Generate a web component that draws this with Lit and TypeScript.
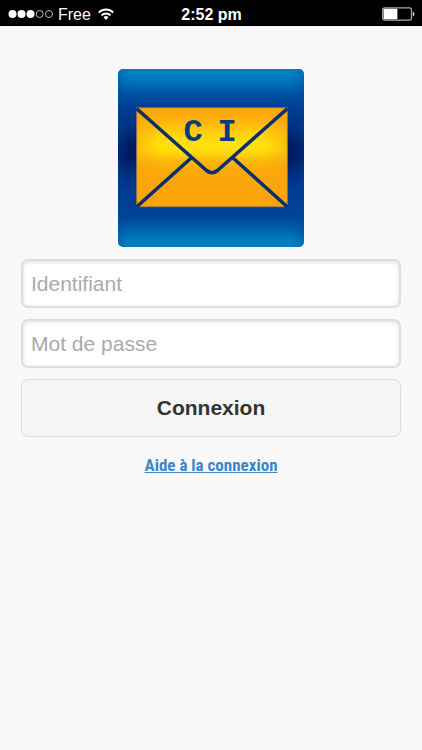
import { LitElement, html, css } from "lit";
import { customElement } from "lit/decorators.js";

@customElement("status-bar")
class StatusBar extends LitElement {
  static styles = css`
    :host {
      display: grid;
      grid-template-columns: 1fr auto 1fr;
      align-items: center;
      height: 26px;
      padding: 0 7px 0 8px;
      background: #000;
      color: #fff;
      font: 16px/26px "Liberation Sans", Arial, sans-serif;
    }
    .carrier {
      display: flex;
      align-items: center;
      gap: 5px;
    }
    .carrier .wifi {
      margin-left: 2px;
    }
    .time {
      font-weight: 700;
      padding-top: 2px;
    }
    .name {
      padding-top: 2px;
    }
    .battery {
      justify-self: end;
    }
    svg {
      display: block;
    }
  `;
  render() {
    return html`
      <div class="carrier">
        <svg width="45" height="10" viewBox="0 0 45 10" aria-hidden="true">
          <g fill="#fff">
            <circle cx="4.5" cy="5" r="4" />
            <circle cx="13.5" cy="5" r="4" />
            <circle cx="22.5" cy="5" r="4" />
          </g>
          <g fill="none" stroke="#bbb">
            <circle cx="31.7" cy="5" r="3.5" />
            <circle cx="41" cy="5" r="3.5" />
          </g>
        </svg>
        <span class="name">Free</span>
        <svg class="wifi" width="16" height="12" viewBox="0 0 16 12" aria-hidden="true">
          <g fill="none" stroke="#fff" stroke-width="2">
            <path d="M0.8 4.6a10.2 10.2 0 0 1 14.4 0" />
            <path d="M3.5 7.4a6.4 6.4 0 0 1 9 0" />
          </g>
          <path d="M8 12L5.5 9.3a3.5 3.5 0 0 1 5 0z" fill="#fff" />
        </svg>
      </div>
      <span class="time">2:52 pm</span>
      <svg class="battery" width="33" height="14" viewBox="0 0 33 14" aria-hidden="true">
        <rect x="0.7" y="0.9" width="28.8" height="12.2" rx="2" fill="none" stroke="#aaa" stroke-width="1.2" />
        <rect x="1.6" y="1.8" width="13.8" height="10.4" rx="0.6" fill="#fff" />
        <path d="M30.8 4.8a2.3 2.3 0 0 1 0 4.4z" fill="#ddd" />
      </svg>
    `;
  }
}

@customElement("mail-logo")
class MailLogo extends LitElement {
  static styles = css`
    :host,
    svg {
      display: block;
    }
    .initials {
      font: 700 32px "Liberation Mono", "Courier New", monospace;
      fill: #0b3a80;
      text-anchor: middle;
    }
  `;
  render() {
    return html`
      <svg width="186" height="178" viewBox="0 0 186 178" role="img" aria-label="CI">
        <defs>
          <linearGradient id="sky" x1="0" y1="0" x2="0" y2="1">
            <stop offset="0" stop-color="#0081c4" />
            <stop offset="0.05" stop-color="#007cc0" />
            <stop offset="0.15" stop-color="#0050a0" />
            <stop offset="0.21" stop-color="#003f92" />
            <stop offset="0.33" stop-color="#003080" />
            <stop offset="0.42" stop-color="#001c62" />
            <stop offset="0.49" stop-color="#00175c" />
            <stop offset="0.6" stop-color="#003080" />
            <stop offset="0.68" stop-color="#003b90" />
            <stop offset="0.83" stop-color="#004496" />
            <stop offset="0.91" stop-color="#0066ae" />
            <stop offset="0.96" stop-color="#007dc0" />
            <stop offset="1" stop-color="#0080c2" />
          </linearGradient>
          <linearGradient id="edge">
            <stop offset="0" stop-color="#00469a" stop-opacity="0.35" />
            <stop offset="0.07" stop-color="#00469a" stop-opacity="0" />
            <stop offset="0.93" stop-color="#00469a" stop-opacity="0" />
            <stop offset="1" stop-color="#00469a" stop-opacity="0.35" />
          </linearGradient>
          <linearGradient id="paper" x1="0" y1="0" x2="0" y2="1">
            <stop offset="0" stop-color="#fca70b" />
            <stop offset="0.1" stop-color="#ffac0b" />
            <stop offset="0.27" stop-color="#ffd40c" />
            <stop offset="0.37" stop-color="#ffe20c" />
            <stop offset="0.44" stop-color="#ffdc0c" />
            <stop offset="0.54" stop-color="#fcb90b" />
            <stop offset="0.64" stop-color="#faa80a" />
            <stop offset="1" stop-color="#f9a40a" />
          </linearGradient>
          <linearGradient id="shade">
            <stop offset="0" stop-color="#f9a40a" stop-opacity="0.6" />
            <stop offset="0.16" stop-color="#f9a40a" stop-opacity="0" />
            <stop offset="0.84" stop-color="#f9a40a" stop-opacity="0" />
            <stop offset="1" stop-color="#f9a40a" stop-opacity="0.6" />
          </linearGradient>
        </defs>
        <rect width="186" height="178" rx="5" fill="url(#sky)" />
        <rect width="186" height="178" rx="5" fill="url(#edge)" />
        <rect x="18.7" y="38.8" width="150.6" height="99" fill="url(#paper)" />
        <rect x="18.7" y="38.8" width="150.6" height="99" fill="url(#shade)" stroke="#8d7b4a" stroke-width="0.8" />
        <g fill="none" stroke="#092f70" stroke-width="3.6">
          <path d="M18.5 39.5L88.5 101.5Q94 106 99.5 101.5L169.5 39.5" />
          <path d="M73.7 88.5L18.5 138M114.5 88.5L169.5 138" />
        </g>
        <text class="initials" y="72"><tspan x="75">C</tspan><tspan x="109">I</tspan></text>
      </svg>
    `;
  }
}

@customElement("app-root")
class AppRoot extends LitElement {
  static styles = css`
    :host {
      display: block;
      min-height: 100vh;
      background: #f9f9f9;
      font-family: "Liberation Sans", Arial, sans-serif;
    }
    main {
      display: flex;
      flex-direction: column;
      padding: 43px 21px 24px;
    }
    mail-logo {
      align-self: center;
      margin-bottom: 12px;
    }
    form {
      display: flex;
      flex-direction: column;
      gap: 11px;
    }
    input,
    button {
      box-sizing: border-box;
      width: 100%;
      margin: 0;
      border-radius: 7px;
      font-family: inherit;
      font-size: 21px;
    }
    input {
      height: 49px;
      padding: 0 8px;
      border: 2px solid #dedede;
      background: #fff;
      box-shadow: inset 0 1px 4px #ddd;
      color: #333;
    }
    input::placeholder {
      color: #aaa;
      opacity: 1;
    }
    button {
      height: 58px;
      padding: 0;
      border: 1px solid #dcdcdc;
      background: #f5f5f5;
      color: #333;
      font-weight: 700;
    }
    .help {
      align-self: center;
      margin-top: 17px;
      color: #3c87c8;
      font: 700 17px/22px "Roboto Condensed", Roboto, sans-serif;
    }
  `;
  render() {
    return html`
      <status-bar></status-bar>
      <main>
        <mail-logo></mail-logo>
        <form @submit=${(e: Event) => e.preventDefault()}>
          <input type="text" aria-label="Identifiant" placeholder="Identifiant" autocomplete="username" />
          <input type="password" aria-label="Mot de passe" placeholder="Mot de passe" autocomplete="current-password" />
          <button type="submit">Connexion</button>
        </form>
        <a class="help" href="#aide">Aide à la connexion</a>
      </main>
    `;
  }
}
